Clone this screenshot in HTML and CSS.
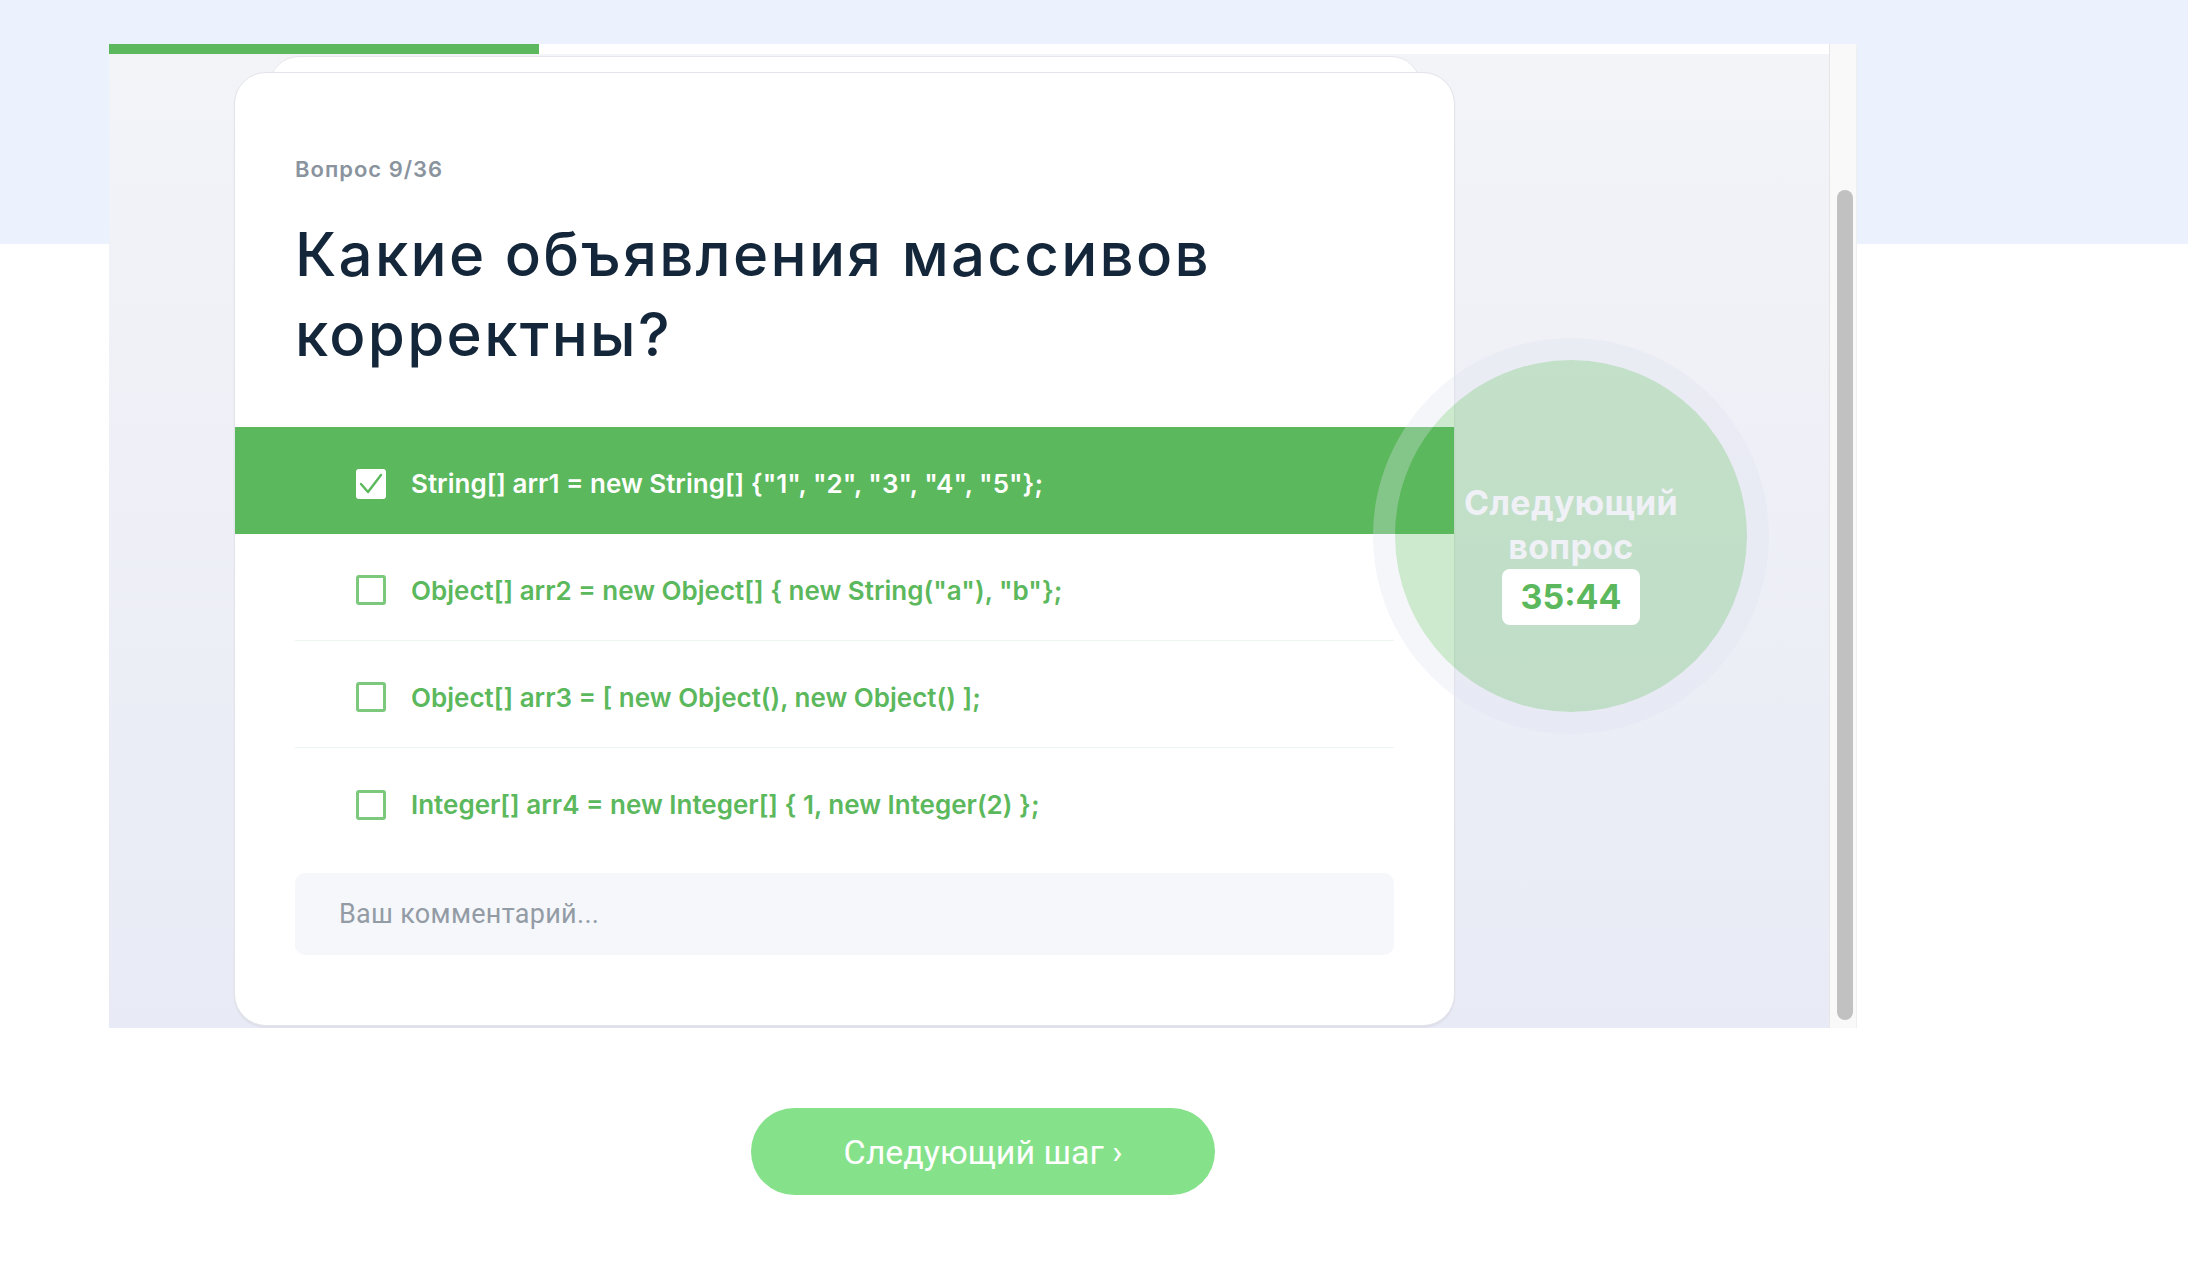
FILE: index.html
```html
<!DOCTYPE html>
<html lang="ru">
<head>
<meta charset="utf-8">
<title>Тест</title>
<link rel="stylesheet" href="styles.css">
</head>
<body>
<div class="page">
  <div class="frame">
    <div class="viewport">
      <div class="progress"><div class="progress-fill"></div></div>
      <div class="stage">
        <div class="card-back"></div>
        <div class="card">
          <div class="q-num">Вопрос 9/36</div>
          <h1 class="q-title">Какие объявления массивов корректны?</h1>
          <ul class="options">
            <li class="option selected">
              <span class="check"><svg viewBox="0 0 30 30" width="30" height="30"><polyline points="5,15 12,23 25,6" fill="none" stroke="#5cb85c" stroke-width="2.4" stroke-linecap="round" stroke-linejoin="round"/></svg></span>
              <span class="opt-text">String[] arr1 = new String[] {"1", "2", "3", "4", "5"};</span>
            </li>
            <li class="option sep">
              <span class="check"></span>
              <span class="opt-text">Object[] arr2 = new Object[] { new String("a"), "b"};</span>
            </li>
            <li class="option sep">
              <span class="check"></span>
              <span class="opt-text">Object[] arr3 = [ new Object(), new Object() ];</span>
            </li>
            <li class="option">
              <span class="check"></span>
              <span class="opt-text">Integer[] arr4 = new Integer[] { 1, new Integer(2) };</span>
            </li>
          </ul>
          <input class="comment" type="text" placeholder="Ваш комментарий...">
        </div>
        <div class="timer">
          <div class="timer-label">Следующий<br>вопрос</div>
          <div class="timer-time">35:44</div>
        </div>
      </div>
    </div>
    <div class="scrollbar"><div class="thumb"></div></div>
  </div>
  <div class="actions">
    <button class="next-btn" type="button">Следующий шаг ›</button>
  </div>
</div>
</body>
</html>
```
FILE: styles.css
```css
* { box-sizing: border-box; }
html, body { margin: 0; padding: 0; }
body { background: #fff; font-family: Inter, "Noto Sans", sans-serif; }

.page {
  min-height: 1268px;
  padding-top: 44px;
  background: linear-gradient(to bottom, #ebf1fd 0, #ebf1fd 244px, #ffffff 244px);
}

.frame {
  margin-left: 109px;
  width: 1748px;
  height: 984px;
  display: flex;
}

.viewport {
  flex: 1;
  display: flex;
  flex-direction: column;
  overflow: hidden;
}

.progress { flex: none; height: 10px; background: #fff; }
.progress-fill { width: 430px; height: 10px; background: #5cb85c; }

.stage {
  flex: 1;
  position: relative;
  overflow: hidden;
  padding: 18px 0 0 125px;
  background: linear-gradient(to bottom, #f3f4f8, #e8eaf5);
}

.card-back {
  position: absolute;
  left: 160px;
  top: 2px;
  width: 1152px;
  height: 900px;
  background: #fff;
  border: 1px solid #e6e7ec;
  border-radius: 30px;
}

.card {
  position: relative;
  width: 1221px;
  height: 954px;
  background: #fff;
  border: 1px solid #e3e4ea;
  border-radius: 32px;
  padding: 83px 60px 0;
  box-shadow: 0 2px 2px rgba(0, 0, 0, 0.05);
}

.q-num {
  font-size: 22px;
  line-height: 26px;
  font-weight: 600;
  color: #8a949e;
  letter-spacing: 1px;
}

.q-title {
  margin: 32px 0 0;
  max-width: 1040px;
  font-size: 60px;
  line-height: 80px;
  font-weight: 500;
  color: #13263a;
  letter-spacing: 2.3px;
}

.options {
  list-style: none;
  margin: 53px -60px 0;
  padding: 0;
}

.option {
  height: 107px;
  margin: 0 60px;
  padding: 6px 0 0 61px;
  display: flex;
  align-items: center;
  gap: 25px;
  color: #5cb85c;
  font-size: 26px;
  font-weight: 600;
}
.option.sep { border-bottom: 1px solid #eef4ee; }

.option.selected {
  margin: 0;
  padding-left: 121px;
  background: #5cb85c;
  color: #fff;
}

.check {
  flex: none;
  width: 30px;
  height: 30px;
  border: 3px solid #7cc87c;
  border-radius: 3px;
  display: flex;
  align-items: center;
  justify-content: center;
}
.check svg { display: block; }
.selected .check { background: #fff; border: 0; }

.comment {
  display: block;
  width: 100%;
  height: 82px;
  margin-top: 18px;
  padding: 0 44px;
  border: 0;
  border-radius: 10px;
  background: #f5f7fb;
  font-family: Roboto, sans-serif;
  font-size: 27px;
  letter-spacing: 0.3px;
  color: #333;
  outline: none;
}
.comment::placeholder { color: #939ba5; }

.timer {
  position: absolute;
  left: 1264px;
  top: 284px;
  width: 396px;
  height: 396px;
  border-radius: 50%;
  border: 22px solid rgba(223, 226, 239, 0.31);
  background: rgba(92, 184, 92, 0.3);
  background-clip: padding-box;
  display: flex;
  flex-direction: column;
  align-items: center;
  justify-content: center;
  padding-top: 34px;
  text-align: center;
}
.timer-label {
  color: #eff1f6;
  font-size: 34px;
  line-height: 44px;
  font-weight: 700;
  letter-spacing: 0.3px;
}
.timer-time {
  width: 138px;
  height: 56px;
  background: #fff;
  border-radius: 8px;
  color: #5cb85c;
  font-size: 34px;
  font-weight: 700;
  line-height: 56px;
}

.scrollbar {
  flex: none;
  width: 28px;
  background: #f9f9f9;
  border-left: 1px solid #e6e6e6;
  border-right: 1px solid #efefef;
  padding: 146px 3px 0 7px;
}
.thumb {
  width: 16px;
  height: 830px;
  border-radius: 8px;
  background: #c1c1c1;
}

.actions {
  margin: 80px 0 0 109px;
  width: 1748px;
  display: flex;
  justify-content: center;
}
.next-btn {
  width: 464px;
  height: 87px;
  border: 0;
  border-radius: 44px;
  background: #86e28a;
  color: #fff;
  font-family: Roboto, sans-serif;
  font-size: 34px;
  font-weight: 400;
  cursor: pointer;
}
```
